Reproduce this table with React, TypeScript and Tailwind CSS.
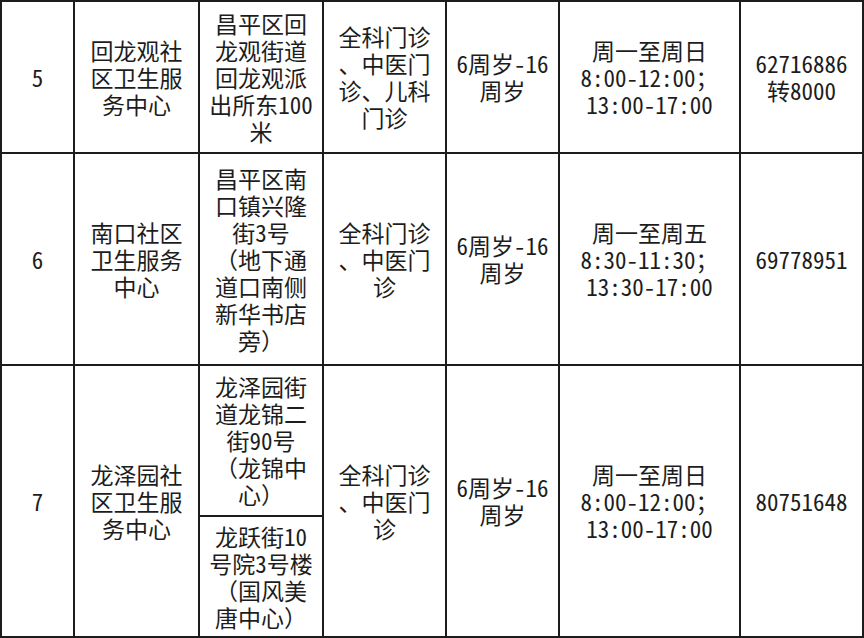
import React from 'react';

type Cell = {
  lines: string[];
  span?: boolean;
};

const rows: Cell[][] = [
  [
    { lines: ['5'] },
    { lines: ['回龙观社', '区卫生服', '务中心'] },
    { lines: ['昌平区回', '龙观街道', '回龙观派', '出所东100', '米'] },
    { lines: ['全科门诊', '、中医门', '诊、儿科', '门诊'] },
    { lines: ['6周岁-16', '周岁'] },
    { lines: ['周一至周日', '8:00-12:00；', '13:00-17:00'] },
    { lines: ['62716886', '转8000'] },
  ],
  [
    { lines: ['6'] },
    { lines: ['南口社区', '卫生服务', '中心'] },
    { lines: ['昌平区南', '口镇兴隆', '街3号', '（地下通', '道口南侧', '新华书店', '旁）'] },
    { lines: ['全科门诊', '、中医门', '诊'] },
    { lines: ['6周岁-16', '周岁'] },
    { lines: ['周一至周五', '8:30-11:30；', '13:30-17:00'] },
    { lines: ['69778951'] },
  ],
  [
    { lines: ['7'], span: true },
    { lines: ['龙泽园社', '区卫生服', '务中心'], span: true },
    { lines: ['龙泽园街', '道龙锦二', '街90号', '（龙锦中', '心）'] },
    { lines: ['全科门诊', '、中医门', '诊'], span: true },
    { lines: ['6周岁-16', '周岁'], span: true },
    { lines: ['周一至周日', '8:00-12:00；', '13:00-17:00'], span: true },
    { lines: ['80751648'], span: true },
  ],
  [{ lines: ['龙跃街10', '号院3号楼', '（国风美', '唐中心）'] }],
];

const App: React.FC = () => {
  return (
    <div className="w-[864px] h-[638px] bg-white">
      <div className="grid w-[864px] h-[638px] gap-[2px] p-[2px] bg-[#1c1c1c] grid-cols-[71px_123px_122px_121px_111px_179px_121px] grid-rows-[150px_210px_149px_119px] text-[23px] leading-[27px] text-[#1d1d1d] [font-family:'Noto_Sans_CJK_SC','Noto_Sans',sans-serif]">
        {rows.flat().map((cell, i) => (
          <div
            key={i}
            className={`bg-white flex flex-col items-center justify-center text-center ${cell.span ? 'row-span-2' : ''}`}
          >
            {cell.lines.map((line, j) => (
              <div
                key={j}
                className={`h-[27px] whitespace-pre ${/[（）]/.test(line) ? '' : "[font-feature-settings:'hwid']"}`}
              >
                {line}
              </div>
            ))}
          </div>
        ))}
      </div>
    </div>
  );
};

export default App;
